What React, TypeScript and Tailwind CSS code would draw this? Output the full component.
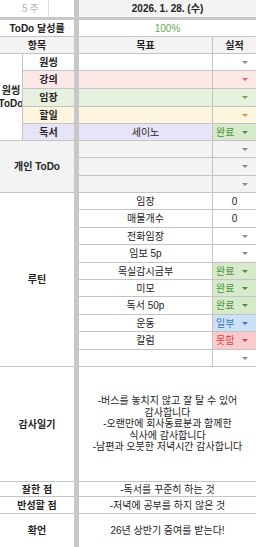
import React from 'react';

type Status = '완료' | '일부' | '못함';

const chipStyles: Record<Status, { cell: string; arrow: string }> = {
  완료: { cell: 'bg-[#d6eacb] text-[#4b8f3a]', arrow: '#4b8f3a' },
  일부: { cell: 'bg-[#cde1f6] text-[#3b73c4]', arrow: '#3b73c4' },
  못함: { cell: 'bg-[#f8cccc] text-[#e53e3e]', arrow: '#e53e3e' },
};

const oneThing = [
  { label: '원씽', bg: 'bg-white', arrow: '#8a8a8a' },
  { label: '강의', bg: 'bg-[#fce8e6]', arrow: '#e06666' },
  { label: '임장', bg: 'bg-[#e6f1df]', arrow: '#6aa84f' },
  { label: '할일', bg: 'bg-[#fef5df]', arrow: '#e69138' },
  { label: '독서', bg: 'bg-[#e8e4f7]', arrow: '#8a8a8a', goal: '세이노', status: '완료' as Status },
];

const routine: { goal: string; value?: string; status?: Status }[] = [
  { goal: '임장', value: '0' },
  { goal: '매물개수', value: '0' },
  { goal: '전화임장' },
  { goal: '임보 5p' },
  { goal: '목실감시금부', status: '완료' },
  { goal: '미모', status: '완료' },
  { goal: '독서 50p', status: '완료' },
  { goal: '운동', status: '일부' },
  { goal: '칼럼', status: '못함' },
  { goal: '' },
];

const line = 'border-b border-[#c4c4c4]';

function Arrow({ color }: { color: string }) {
  return (
    <svg width="6" height="3" viewBox="0 0 6 3" className="shrink-0">
      <polygon points="0,0 6,0 3,3" fill={color} />
    </svg>
  );
}

// 실적 cell: empty dropdown, number, or coloured chip
function ResultCell({ bg = 'bg-white', arrow = '#8a8a8a', value, status }: { bg?: string; arrow?: string; value?: string; status?: Status }) {
  if (value !== undefined) {
    return <div className={`${line} ${bg} flex items-center justify-center`}>{value}</div>;
  }
  if (status) {
    const s = chipStyles[status];
    return (
      <div className={`${line} ${s.cell} flex items-center justify-between pl-[3px] pr-[8px]`}>
        <span>{status}</span>
        <Arrow color={s.arrow} />
      </div>
    );
  }
  return (
    <div className={`${line} ${bg} flex items-center justify-end pr-[8px]`}>
      <Arrow color={arrow} />
    </div>
  );
}

export default function App() {
  return (
    <div className="w-[256px] h-[547px] overflow-hidden bg-white text-[10px] text-[#222] font-['Liberation_Sans','Noto_Sans_CJK_KR',sans-serif]">
      <div className="grid grid-cols-[23px_51px_5px_134px_43px] grid-rows-[17px_3px_17px_17px_17px_18px_18px_17px_17px_17px_18px_17px_17px_18px_17px_18px_17px_17px_18px_17px_18px_17px_115px_15px_17px_33px]">
        {/* frozen pane dividers */}
        <div className="col-start-3 row-span-full bg-[#c8c8c8]" />
        <div className="row-start-2 col-span-full bg-[#c8c8c8]" />

        {/* week / date */}
        <div className="col-span-2 row-start-1 flex">
          <div className="w-[49px] border-r border-[#e0e0e0] flex items-center pl-[22px] gap-[2px] text-[#b4b4b4]">
            <span>5</span>
            <span>주</span>
          </div>
        </div>
        <div className="col-start-4 col-span-2 row-start-1 bg-[#f3f3f3] flex items-center justify-center font-bold">
          2026. 1. 28. (수)
        </div>

        {/* achievement */}
        <div className={`col-start-1 col-span-2 row-start-3 ${line} flex items-center justify-center font-bold`}>ToDo 달성률</div>
        <div className={`col-start-4 col-span-2 row-start-3 ${line} flex items-center justify-center text-[#6aa84f]`}>100%</div>

        {/* header */}
        <div className={`col-start-1 col-span-2 ${line} bg-[#f3f3f3] flex items-center justify-center font-bold`}>항목</div>
        <div className={`col-start-4 ${line} border-r bg-[#f3f3f3] flex items-center justify-center font-bold`}>목표</div>
        <div className={`${line} bg-[#f3f3f3] flex items-center justify-center font-bold`}>실적</div>

        {/* 원씽 ToDo */}
        <div className={`col-start-1 row-span-5 ${line} border-r overflow-hidden flex items-center justify-center`}>
          <div className="flex flex-col items-center font-bold leading-[13px] whitespace-nowrap">
            <span>원씽</span>
            <span>ToDo</span>
          </div>
        </div>
        {oneThing.map((r) => (
          <React.Fragment key={r.label}>
            <div className={`col-start-2 ${line} ${r.bg} flex items-center justify-center font-bold`}>{r.label}</div>
            <div className={`col-start-4 ${line} border-r ${r.bg} flex items-center justify-center`}>{r.goal ?? ''}</div>
            <ResultCell bg={r.bg} arrow={r.arrow} status={r.status} />
          </React.Fragment>
        ))}

        {/* 개인 ToDo */}
        <div className={`col-start-1 col-span-2 row-span-3 ${line} bg-[#f3f3f3] flex items-center justify-center font-bold`}>개인 ToDo</div>
        {[0, 1, 2].map((i) => (
          <React.Fragment key={i}>
            <div className={`col-start-4 ${line} border-r bg-[#f3f3f3]`} />
            <ResultCell bg="bg-[#f3f3f3]" />
          </React.Fragment>
        ))}

        {/* 루틴 */}
        <div className={`col-start-1 col-span-2 row-span-10 ${line} flex items-center justify-center font-bold`}>루틴</div>
        {routine.map((r, i) => (
          <React.Fragment key={i}>
            <div className={`col-start-4 ${line} border-r flex items-center justify-center`}>{r.goal}</div>
            <ResultCell value={r.value} status={r.status} />
          </React.Fragment>
        ))}

        {/* 감사일기 */}
        <div className={`col-start-1 col-span-2 ${line} flex items-center justify-center font-bold`}>감사일기</div>
        <div className={`col-start-4 col-span-2 ${line} flex items-center justify-center`}>
          <p className="text-center leading-[11.5px] whitespace-nowrap">
            -버스를 놓치지 않고 잘 탈 수 있어
            <br />
            감사합니다
            <br />
            -오랜만에 회사동료분과 함께한
            <br />
            식사에 감사합니다
            <br />
            -남편과 오붓한 저녁시간 감사합니다
          </p>
        </div>

        {/* 잘한 점 / 반성할 점 / 확언 */}
        <div className={`col-start-1 col-span-2 ${line} flex items-center justify-center font-bold`}>잘한 점</div>
        <div className={`col-start-4 col-span-2 ${line} flex items-center justify-center`}>-독서를 꾸준히 하는 것</div>
        <div className={`col-start-1 col-span-2 ${line} flex items-center justify-center font-bold`}>반성할 점</div>
        <div className={`col-start-4 col-span-2 ${line} flex items-center justify-center`}>-저녁에 공부를 하지 않은 것</div>
        <div className="col-start-1 col-span-2 flex items-center justify-center font-bold">확언</div>
        <div className="col-start-4 col-span-2 flex items-center justify-center">26년 상반기 증여를 받는다!</div>
      </div>
    </div>
  );
}
